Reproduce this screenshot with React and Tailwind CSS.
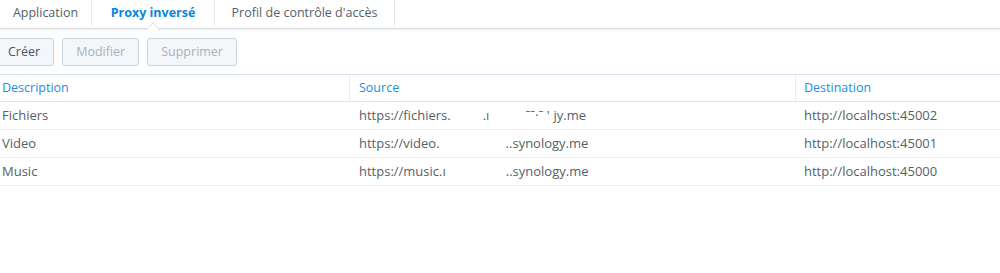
const rows = [
    {
        name: "Fichiers",
        source: (
            <>
                https://fichiers.<span className="ml-[32px]">.ı</span>
                <span className="ml-[36px]">ˉˉ·ˉ '</span>
                <span className="ml-[4px]">jy.me</span>
            </>
        ),
        dest: "http://localhost:45002",
    },
    {
        name: "Video",
        source: (
            <>
                https://video.<span className="ml-[66px]">..synology.me</span>
            </>
        ),
        dest: "http://localhost:45001",
    },
    {
        name: "Music",
        source: (
            <>
                https://music.ı<span className="ml-[60px]">..synology.me</span>
            </>
        ),
        dest: "http://localhost:45000",
    },
];

function Tab({ label, active, width }) {
    return (
        <div
            className={`relative h-[26px] flex items-center justify-center border-r border-[#e4e8ec] ${width} ${
                active ? "text-[#0a86e0] font-bold" : "text-[#56606a]"
            }`}
        >
            {label}
            {active && (
                <svg
                    className="absolute left-1/2 -translate-x-1/2 bottom-[-4px]"
                    width="14"
                    height="7"
                    viewBox="0 0 14 7"
                >
                    <path d="M0 7 L7 0 L14 7" fill="#fff" stroke="#dcdfe3" strokeWidth="1" />
                </svg>
            )}
        </div>
    );
}

function Button({ label, disabled, extra = "" }) {
    return (
        <button
            className={`h-[28px] px-[13px] rounded-[3px] border border-[#c9d3dc] bg-[#f4f7fa] text-[12.5px] ${
                disabled ? "text-[#a8b2bc]" : "text-[#4a545e]"
            } ${extra}`}
        >
            {label}
        </button>
    );
}

export default function App() {
    return (
        <div
            className="w-[1000px] h-[273px] bg-white overflow-hidden text-[12.5px]"
            style={{ fontFamily: '"Open Sans", "Noto Sans", sans-serif' }}
        >
            {/* tab strip */}
            <div className="relative flex h-[29px] border-b border-[#dadde1] shadow-[0_1px_2px_rgba(0,0,0,0.08)]">
                <Tab label="Application" width="w-[92px]" />
                <Tab label="Proxy inversé" active width="w-[123px]" />
                <Tab label="Profil de contrôle d'accès" width="w-[180px]" />
            </div>

            {/* toolbar */}
            <div className="flex gap-[8px] pt-[9px] pb-[8px]">
                <Button label="Créer" extra="ml-[-7px] pl-[14px] pr-[13px]" />
                <Button label="Modifier" disabled extra="px-[12px]" />
                <Button label="Supprimer" disabled />
            </div>

            {/* table */}
            <div className="border-t border-[#d6e0ea]">
                <div className="grid grid-cols-[350px_446px_1fr] h-[27px] pt-[1px] border-b border-[#e0e6ec] text-[#1a8ee6]">
                    <div className="flex items-center pl-[2px] border-r border-[#e6ebf0]">Description</div>
                    <div className="flex items-center pl-[9px] border-r border-[#e6ebf0]">Source</div>
                    <div className="flex items-center pl-[8px]">Destination</div>
                </div>
                {rows.map((r) => (
                    <div
                        key={r.name}
                        className="grid grid-cols-[350px_446px_1fr] h-[28px] border-b border-[#eceef0] text-[#555f69] text-[13px]"
                    >
                        <div className="flex items-center pl-[2px]">{r.name}</div>
                        <div className="flex items-center pl-[9px] whitespace-pre">{r.source}</div>
                        <div className="flex items-center pl-[8px]">{r.dest}</div>
                    </div>
                ))}
            </div>
        </div>
    );
}
